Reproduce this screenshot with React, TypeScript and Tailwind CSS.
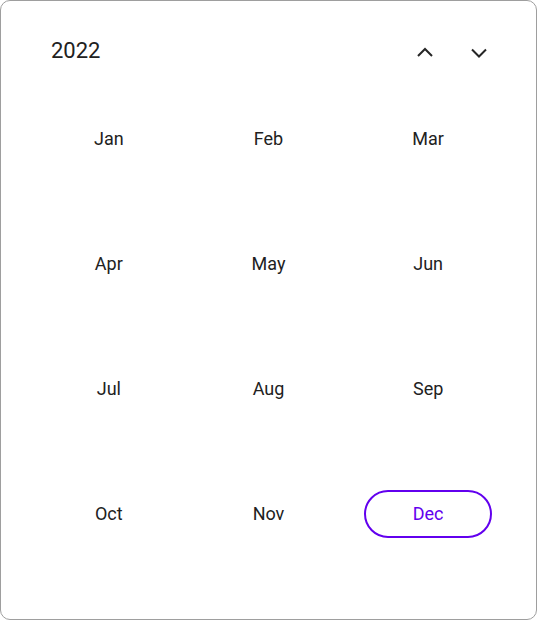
import React from "react";

const months = ["Jan","Feb","Mar","Apr","May","Jun","Jul","Aug","Sep","Oct","Nov","Dec"];

function Chevron({ up }: { up?: boolean }) {
  return (
    <svg width="24" height="24" viewBox="0 0 24 24" fill="none">
      <path d={up ? "M5 17l7-7 7 7" : "M5 10.5l7 7 7-7"} stroke="#262626" strokeWidth="2" strokeLinecap="butt" strokeLinejoin="miter" />
    </svg>
  );
}

export default function App() {
  return (
    <div className="w-[537px] h-[620px] bg-white" style={{ fontFamily: "Roboto, sans-serif" }}>
      <div className="w-full h-full border border-[#9e9e9e] rounded-[10px] flex flex-col">
        <div className="h-[51px] mt-[24px] flex items-center pl-[50px] pr-[37px]">
          <span className="text-[22px] text-[#212121] flex-1">2022</span>
          <button className="w-[40px] h-[40px] flex items-center justify-center mr-[14px]"><Chevron up /></button>
          <button className="w-[40px] h-[40px] flex items-center justify-center"><Chevron /></button>
        </div>
        <div className="grid grid-cols-3 px-[28px]">
          {months.map((m) => (
            <div key={m} className="h-[125px] flex items-center justify-center">
              {m === "Dec" ? (
                <div className="w-[128px] h-[48px] rounded-full border-2 border-[#6200ee] text-[#6200ee] flex items-center justify-center text-[18px]">{m}</div>
              ) : (
                <span className="text-[18px] text-[#212121]">{m}</span>
              )}
            </div>
          ))}
        </div>
      </div>
    </div>
  );
}
